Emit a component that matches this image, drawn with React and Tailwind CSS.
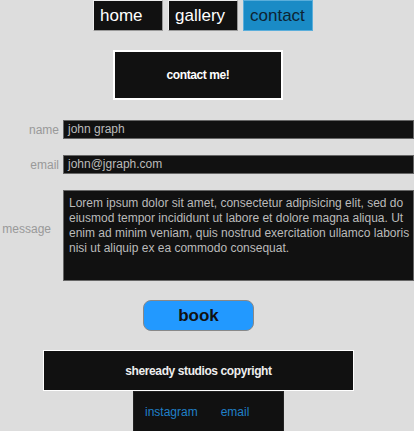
export default function App() {
  const font = { fontFamily: '"Liberation Sans", Arial, sans-serif' };
  const lorem =
    'Lorem ipsum dolor sit amet, consectetur adipisicing elit, sed do eiusmod tempor incididunt ut labore et dolore magna aliqua. Ut enim ad minim veniam, quis nostrud exercitation ullamco laboris nisi ut aliquip ex ea commodo consequat.';

  return (
    <div className="w-[414px] h-[431px] overflow-hidden bg-[#dddddd] font-['Liberation_Sans',Arial,sans-serif]" style={font}>
      <nav className="flex gap-[5px] pl-[93px]">
        <a className="w-[70px] h-[31px] bg-[#111] border border-t-[#eee] border-l-[#eee] border-r-[#999] border-b-[#999] text-white text-[17px] leading-[29px] pl-[6px]">home</a>
        <a className="w-[70px] h-[31px] bg-[#111] border border-t-[#eee] border-l-[#eee] border-r-[#999] border-b-[#999] text-white text-[17px] leading-[29px] pl-[6px]">gallery</a>
        <a className="w-[70px] h-[31px] bg-[#1a8bc6] border border-[#5aaedb] text-[#0d2433] text-[17px] leading-[29px] pl-[6px]">contact</a>
      </nav>

      <div className="mt-[19px] ml-[113px] w-[170px] h-[50px] bg-[#111] border-2 border-white flex items-center justify-center text-white text-[12px] font-bold tracking-[-0.4px]">
        contact me!
      </div>

      <div className="mt-[20px] flex flex-col gap-[16px]">
        <div className="flex items-center">
          <label className="w-[59px] text-right text-[12px] text-[#999]">name</label>
          <div className="ml-[4px] w-[351px] h-[19px] bg-[#111] border border-[#666] text-[#bbb] text-[12px] leading-[17px] pl-[4px]">john graph</div>
        </div>
        <div className="flex items-center">
          <label className="w-[59px] text-right text-[12px] text-[#999]">email</label>
          <div className="ml-[4px] w-[351px] h-[19px] bg-[#111] border border-[#666] text-[#bbb] text-[12px] leading-[17px] pl-[4px]">john@jgraph.com</div>
        </div>
        <div className="flex items-center">
          <label className="w-[51px] mb-[13px] text-right text-[12px] text-[#999]">message</label>
          <div className="ml-[12px] w-[351px] h-[91px] bg-[#111] border border-[#666] text-[#bbb] text-[12px] leading-[15px] pl-[5px] pr-[3px] pt-[5px]">
            {lorem}
          </div>
        </div>
      </div>

      <button className="block mt-[19px] ml-[143px] w-[111px] h-[31px] rounded-[8px] bg-[#2299ff] border border-[#888] text-[#111] text-[17px] leading-[27px] font-bold">
        book
      </button>

      <footer className="mt-[19px] ml-[43px] w-[311px] h-[41px] bg-[#111] border border-white flex items-center justify-center text-[#eee] text-[12px] font-bold tracking-[-0.4px]">
        sheready studios copyright
      </footer>

      <div className="ml-[133px] w-[151px] h-[60px] bg-[#111] border border-[#222] flex gap-[23px] pl-[11px] pt-[11px] text-[12px] text-[#2080c8]">
        <a>instagram</a>
        <a>email</a>
      </div>
    </div>
  );
}
